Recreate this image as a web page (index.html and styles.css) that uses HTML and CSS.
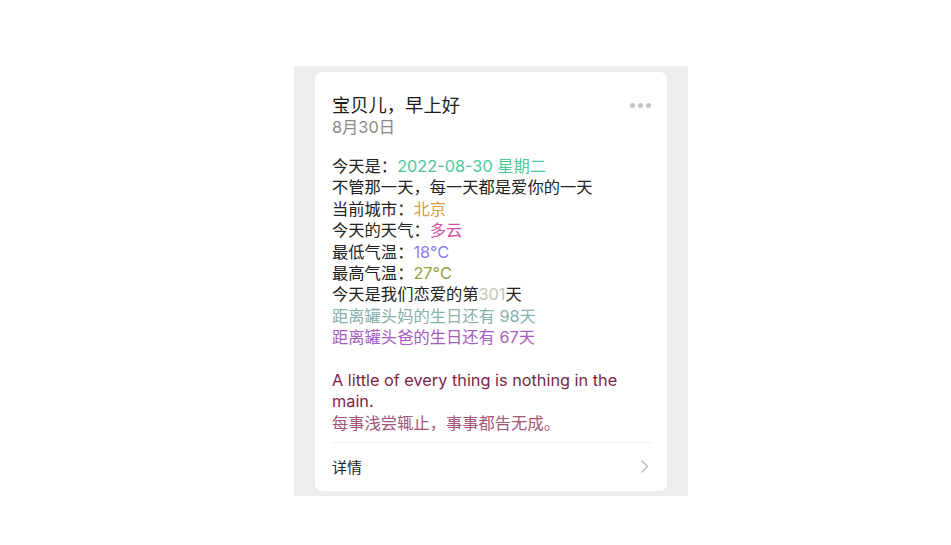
FILE: index.html
```html
<!DOCTYPE html>
<html lang="zh">
<head>
<meta charset="utf-8">
<link rel="stylesheet" href="styles.css">
</head>
<body>
<div class="stage">
  <div class="panel">
    <div class="card">
      <div class="head">
        <div class="titles">
          <div class="title">宝贝儿，早上好</div>
          <div class="date">8月30日</div>
        </div>
        <div class="more"><span></span><span></span><span></span></div>
      </div>
      <div class="body">
        <div>今天是：<span class="c-teal">2022-08-30 星期二</span></div>
        <div>不管那一天，每一天都是爱你的一天</div>
        <div>当前城市：<span class="c-gold">北京</span></div>
        <div>今天的天气：<span class="c-pink">多云</span></div>
        <div>最低气温：<span class="c-violet">18°C</span></div>
        <div>最高气温：<span class="c-olive">27°C</span></div>
        <div>今天是我们恋爱的第<span class="c-beige">301</span>天</div>
        <div class="c-sage">距离罐头妈的生日还有 98天</div>
        <div class="c-purple">距离罐头爸的生日还有 67天</div>
        <div class="blank">&nbsp;</div>
        <div class="c-maroon">A little of every thing is nothing in the main.</div>
        <div class="c-rose">每事浅尝辄止，事事都告无成。</div>
      </div>
      <div class="foot">
        <span>详情</span>
        <svg class="chev" width="8" height="13" viewBox="0 0 8 13"><path d="M1 1l5.5 5.5L1 12" fill="none" stroke="#b8b8b8" stroke-width="1.4" stroke-linecap="round" stroke-linejoin="round"/></svg>
      </div>
    </div>
  </div>
</div>
</body>
</html>
```

FILE: styles.css
```css
html, body {
  margin: 0;
  padding: 0;
  background: #ffffff;
}
.stage {
  padding: 66px 0 0 294px;
}
.panel {
  width: 394px;
  height: 430px;
  box-sizing: border-box;
  background: #ededed;
  padding: 6px 21px 5px 21px;
}
.card {
  background: #ffffff;
  border-radius: 7px;
  height: 419px;
  box-sizing: border-box;
  padding: 21px 15px 0 17px;
  display: flex;
  flex-direction: column;
  font-family: "Inter", "Noto Sans CJK SC", "Noto Sans", sans-serif;
  color: #222222;
}
.head {
  display: flex;
  justify-content: space-between;
  align-items: flex-start;
}
.title {
  font-size: 18.3px;
  line-height: 24px;
  color: #1c1c1c;
}
.date {
  font-size: 16.3px;
  line-height: 21px;
  color: #8a8a8a;
}
.more {
  display: flex;
  gap: 3px;
  margin-top: 10px;
  margin-right: 1px;
}
.more span {
  width: 5px;
  height: 5px;
  border-radius: 50%;
  background: #c4c4c4;
}
.body {
  margin-top: 18px;
  font-size: 16.3px;
  line-height: 21.4px;
}
.c-teal { color: #4dc79a; }
.c-gold { color: #d59d43; }
.c-pink { color: #d150a3; }
.c-violet { color: #8a7ff0; }
.c-olive { color: #8ea53a; }
.c-beige { color: #c3c6b3; }
.c-sage { color: #88b0ad; }
.c-purple { color: #a65dc2; }
.c-maroon { color: #7d1e48; }
.c-rose { color: #a2567a; }
.foot {
  margin-top: 8px;
  border-top: 1px solid #f0f0f0;
  height: 46px;
  display: flex;
  align-items: center;
  justify-content: space-between;
  font-size: 15px;
  color: #222222;
  padding-right: 3px;
}
```
